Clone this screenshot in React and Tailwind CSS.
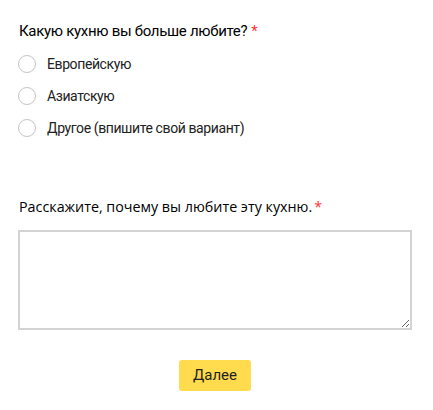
const options = ['Европейскую', 'Азиатскую', 'Другое (впишите свой вариант)']

function Radio({ label }) {
    return (
        <label className="flex items-center h-[32px] cursor-pointer">
            <span className="w-[18px] h-[18px] rounded-full border border-[#c4c4c4] bg-white shrink-0"></span>
            <span className="ml-[11px] text-[14px] tracking-[-0.4px] text-[#222]">{label}</span>
        </label>
    )
}

export default function App() {
    return (
        <div className="w-[433px] h-[410px] bg-white pl-[18px] pr-[21px] pt-[20px] font-['Roboto',sans-serif] text-black">
            {/* Question 1 */}
            <div className="pl-[1px] text-[15px] leading-[22px] tracking-[-0.3px]">
                Какую кухню вы больше любите?<span className="text-[#f33] ml-[4px]">*</span>
            </div>
            <div className="mt-[6px] flex flex-col">
                {options.map((o) => (
                    <Radio key={o} label={o} />
                ))}
            </div>

            {/* Question 2 */}
            <div className="mt-[52px] pl-[1px] text-[14.3px] leading-[22px] font-['Open_Sans',sans-serif]">
                Расскажите, почему вы любите эту кухню.<span className="text-[#f33] ml-[2px]">*</span>
            </div>
            <textarea className="mt-[12px] block w-[394px] h-[100px] border-2 border-[#d3d3d3] outline-none resize-y"></textarea>

            <div className="mt-[30px] flex justify-center">
                <button className="w-[72px] h-[31px] rounded-[3px] bg-[#ffdb4d] text-[15px] text-[#222]">
                    Далее
                </button>
            </div>
        </div>
    )
}
